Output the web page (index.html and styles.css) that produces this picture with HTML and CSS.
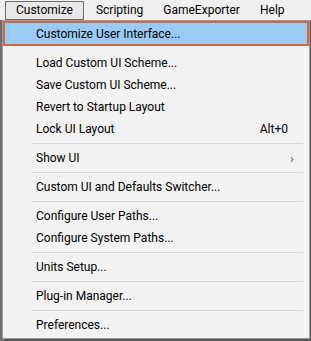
FILE: index.html
```html
<!DOCTYPE html>
<html lang="en">
	<head>
		<meta charset="UTF-8" />
		<meta name="viewport" content="width=device-width, initial-scale=1.0" />
		<title>Customize Menu</title>
		<link rel="stylesheet" href="styles.css">
	</head>
	<body>
		<div class="menubar">
			<span class="menubar__item menubar__item--open">Customize</span>
			<span class="menubar__item">Scripting</span>
			<span class="menubar__item">GameExporter</span>
			<span class="menubar__item">Help</span>
		</div>

		<div class="menu">
			<div class="menu__item menu__item--active">Customize User Interface...</div>
			<div class="menu__group">
				<div class="menu__item">Load Custom UI Scheme...</div>
				<div class="menu__item">Save Custom UI Scheme...</div>
				<div class="menu__item">Revert to Startup Layout</div>
				<div class="menu__item">Lock UI Layout <span class="menu__shortcut">Alt+0</span></div>
				<div class="menu__sep"></div>
				<div class="menu__item">Show UI <span class="menu__arrow">&#x203A;</span></div>
				<div class="menu__sep"></div>
				<div class="menu__item">Custom UI and Defaults Switcher...</div>
				<div class="menu__sep"></div>
				<div class="menu__item">Configure User Paths...</div>
				<div class="menu__item">Configure System Paths...</div>
				<div class="menu__sep"></div>
				<div class="menu__item">Units Setup...</div>
				<div class="menu__sep"></div>
				<div class="menu__item">Plug-in Manager...</div>
				<div class="menu__sep"></div>
				<div class="menu__item">Preferences...</div>
			</div>
		</div>
	</body>
</html>
```

FILE: styles.css
```css
* {
	box-sizing: border-box;
	margin: 0;
	padding: 0;
}

body {
	font-family: Roboto, "Noto Sans", sans-serif;
	font-size: 12px;
	color: #000;
	background-color: #6e6e6e;
	height: 341px;
	overflow: hidden;
}

.menubar {
	display: flex;
	align-items: center;
	height: 20px;
	background-color: #f0f0f0;
	padding-left: 5px;
}

.menubar__item {
	height: 19px;
	line-height: 17px;
	padding: 0 9px;
	border: 1px solid transparent;
}

.menubar__item--open {
	border-color: #6d6d6d;
	background-color: #e8e8e8;
	padding: 0 10px;
	margin-right: 2px;
}

.menu {
	margin-left: 2px;
	width: 308px;
	height: 319px;
	background-color: #f2f2f2;
	border: 1px solid #9a9a9a;
	box-shadow: 2px 2px 0 #5a5a5a;
}

.menu__item {
	display: flex;
	align-items: center;
	justify-content: space-between;
	height: 22px;
	padding: 0 20px 0 33px;
}

.menu__item--active {
	height: 25px;
	padding-left: 31px;
	background-color: #99cbf6;
	border: 2px solid #d4673f;
}

.menu__group {
	padding-top: 6px;
}

.menu__shortcut {
	padding-right: 1px;
}

.menu__arrow {
	font-size: 13px;
	color: #555;
	margin-right: -5px;
}

.menu__sep {
	height: 7px;
	margin: 0 6px 0 29px;
	background: linear-gradient(#d7d7d7, #d7d7d7) 0 3px / 100% 1px no-repeat;
}
```
